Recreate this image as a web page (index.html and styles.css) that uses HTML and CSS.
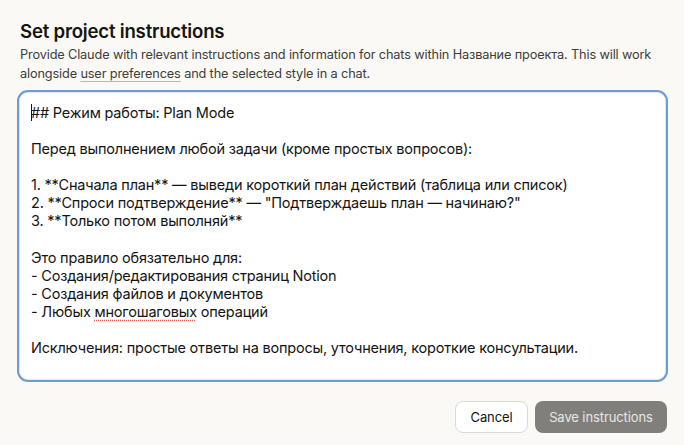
FILE: index.html
```html
<!DOCTYPE html>
<html lang="en">
<head>
    <meta charset="UTF-8">
    <meta name="viewport" content="width=device-width, initial-scale=1.0">
    <title>Set project instructions</title>
    <link rel="stylesheet" href="styles.css">
</head>
<body>
    <div class="dialog">
        <h2 class="title">Set project instructions</h2>
        <p class="description">Provide Claude with relevant instructions and information for chats within Название проекта. This will work alongside <a href="#" class="link">user preferences</a> and the selected style in a chat.</p>

        <div class="editor">
<div class="editor-text"><span class="caret"></span>## Режим работы: Plan Mode

Перед выполнением любой задачи (кроме простых вопросов):

1. **Сначала план** — выведи короткий план действий (таблица или список)
2. **Спроси подтверждение** — "Подтверждаешь план — начинаю?"
3. **Только потом выполняй**

Это правило обязательно для:
- Создания/редактирования страниц Notion
- Создания файлов и документов
- Любых <span class="misspelled">многошаговых</span> операций

Исключения: простые ответы на вопросы, уточнения, короткие консультации.</div>
        </div>

        <div class="actions">
            <button class="btn btn-cancel">Cancel</button>
            <button class="btn btn-save">Save instructions</button>
        </div>
    </div>
</body>
</html>
```

FILE: styles.css
```css
* {
    box-sizing: border-box;
}

body {
    margin: 0;
    padding: 0;
    background-color: #faf9f5;
    font-family: Inter, "Noto Sans", sans-serif;
    color: #141413;
}

.dialog {
    padding: 18px 16px 12px 17px;
    display: flex;
    flex-direction: column;
}

.title {
    margin: 0 0 1px 3px;
    font-size: 18.6px;
    font-weight: 600;
    line-height: 26px;
    letter-spacing: -0.2px;
}

.description {
    margin: 0 0 7px 3px;
    font-size: 12.75px;
    line-height: 19px;
    letter-spacing: -0.15px;
    color: #3d3d3a;
}

.link {
    color: #3d3d3a;
    text-decoration: underline;
    text-decoration-color: #b8b6ae;
    text-underline-offset: 3px;
}

.editor {
    height: 292px;
    background-color: #fff;
    border: 2px solid #6f9bd3;
    border-radius: 11px;
    box-shadow: inset 0 0 0 1px #e8e6df;
    padding: 12px 12px;
}

.editor-text {
    white-space: pre-wrap;
    font-size: 14.5px;
    line-height: 18.08px;
    letter-spacing: -0.2px;
    color: #141413;
}

.caret {
    display: inline-block;
    width: 1px;
    height: 17px;
    background-color: #141413;
    vertical-align: -3px;
    margin-right: -1px;
}

.misspelled {
    text-decoration: underline dotted #e05a4a;
    text-underline-offset: 3px;
}

.actions {
    display: flex;
    justify-content: flex-end;
    gap: 7px;
    margin-top: 19px;
    padding-right: 1px;
}

.btn {
    font-family: Inter, "Noto Sans", sans-serif;
    font-size: 13px;
    letter-spacing: -0.1px;
    height: 32px;
    border-radius: 8px;
    padding: 0;
    white-space: nowrap;
    cursor: pointer;
}

.btn-cancel {
    background-color: #fff;
    border: 1px solid #dcdad3;
    color: #141413;
    width: 73px;
}

.btn-save {
    background-color: #807f7c;
    border: none;
    color: #e8e7e3;
    width: 132px;
}
```
